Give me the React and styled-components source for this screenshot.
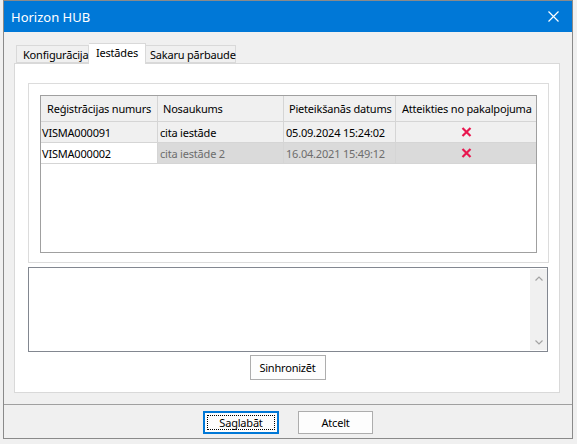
import React from "react";
import styled, { createGlobalStyle } from "styled-components";

const GlobalStyle = createGlobalStyle`
  body {
    margin: 0;
    background: #f0f0f0;
    font-family: "Noto Sans", "Segoe UI", sans-serif;
    font-size: 11px;
    letter-spacing: -0.2px;
    color: #000;
  }
`;

const Screen = styled.div`
  height: 444px;
  padding-left: 3px;
  background: #f0f0f0;
`;

const Window = styled.div`
  width: 570px;
  height: 439px;
  box-sizing: border-box;
  border: 1px solid #8a8a8a;
  display: flex;
  flex-direction: column;
  background: #f0f0f0;
`;

const TitleBar = styled.div`
  height: 31px;
  flex: none;
  background: #0078d7;
  color: #fff;
  display: flex;
  align-items: center;
  justify-content: space-between;
  padding: 0 13px 0 7px;
  font-size: 13px;
  letter-spacing: 0;
`;

const Body = styled.div`
  padding: 11px 12px 0 10px;
  display: flex;
  flex-direction: column;
`;

const TabStrip = styled.div`
  display: flex;
  align-items: flex-end;
  height: 20px;
  padding-left: 2px;
  position: relative;
  z-index: 1;
`;

const Tab = styled.div`
  box-sizing: border-box;
  width: ${(p) => p.$width}px;
  height: ${(p) => (p.$active ? 21 : 18)}px;
  margin-bottom: ${(p) => (p.$active ? -1 : 0)}px;
  border: 1px solid #d9d9d9;
  border-bottom: ${(p) => (p.$active ? "none" : "1px solid #d9d9d9")};
  background: ${(p) => (p.$active ? "#fff" : "#f0f0f0")};
  display: flex;
  align-items: center;
  padding-left: ${(p) => p.$pad}px;
  padding-bottom: ${(p) => (p.$active ? 3 : 0)}px;
  white-space: nowrap;
  & + & {
    border-left: ${(p) => (p.$active ? "1px solid #d9d9d9" : "none")};
  }
`;

const Panel = styled.div`
  box-sizing: border-box;
  height: 330px;
  border: 1px solid #d9d9d9;
  background: #fff;
  padding: 19px 10px 0 13px;
  display: flex;
  flex-direction: column;
`;

const GroupBox = styled.div`
  box-sizing: border-box;
  height: 180px;
  border: 1px solid #dcdcdc;
  padding: 11px 11px 9px 11px;
`;

const Grid = styled.div`
  box-sizing: border-box;
  height: 158px;
  border: 1px solid #a0a0a0;
  display: grid;
  grid-template-columns: 117px 126px 112px 140px;
  grid-auto-rows: 21px;
  grid-template-rows: 26px;
  align-content: start;
`;

const HeadCell = styled.div`
  box-sizing: border-box;
  background: #f0f0f0;
  border-right: ${(p) => (p.$last ? "none" : "1px solid #d5d5d5")};
  border-bottom: 1px solid #d5d5d5;
  display: flex;
  align-items: center;
  padding-left: ${(p) => p.$pad}px;
  white-space: nowrap;
  overflow: hidden;
`;

const Cell = styled.div`
  box-sizing: border-box;
  background: ${(p) => p.$bg};
  color: ${(p) => p.$color || "#000"};
  border-right: ${(p) => (p.$last ? "none" : "1px solid #d5d5d5")};
  border-bottom: 1px solid #d5d5d5;
  display: flex;
  align-items: center;
  justify-content: ${(p) => (p.$center ? "center" : "flex-start")};
  padding-left: ${(p) => (p.$center ? 0 : p.$pad || 2)}px;
  white-space: nowrap;
  overflow: hidden;
`;

const Memo = styled.div`
  box-sizing: border-box;
  width: 520px;
  height: 85px;
  margin-top: 4px;
  border: 1px solid #828790;
  background: #fff;
  display: flex;
  justify-content: flex-end;
  padding: 1px 0 1px 0;
`;

const ScrollBar = styled.div`
  width: 17px;
  background: #f0f0f0;
  display: flex;
  flex-direction: column;
  justify-content: space-between;
  align-items: center;
  padding: 7px 0 5px;
`;

const Button = styled.div`
  box-sizing: border-box;
  width: ${(p) => p.$width}px;
  height: ${(p) => p.$height}px;
  border: 1px solid ${(p) => (p.$default ? "#0078d7" : "#adadad")};
  box-shadow: ${(p) => (p.$default ? "inset 0 0 0 1px #0078d7" : "none")};
  background: #fdfdfd;
  display: flex;
  align-items: center;
  justify-content: center;
  padding: 3px;
`;

const FocusRect = styled.div`
  flex: 1;
  align-self: stretch;
  border: 1px dotted #000;
  display: flex;
  align-items: center;
  justify-content: center;
`;

const SyncRow = styled.div`
  display: flex;
  justify-content: center;
  margin-top: 3px;
  padding-right: 2px;
`;

const Separator = styled.div`
  height: 1px;
  background: #a0a0a0;
  margin-top: 11px;
`;

const Footer = styled.div`
  display: flex;
  justify-content: center;
  gap: 19px;
  padding: 6px 0 0 0;
`;

const CloseIcon = () => (
  <svg width="11" height="11" viewBox="0 0 11 11">
    <path d="M0.5 0.5 L10.5 10.5 M10.5 0.5 L0.5 10.5" stroke="#fff" strokeWidth="1.2" />
  </svg>
);

const RedX = () => (
  <svg width="11" height="10" viewBox="0 0 11 10">
    <path d="M1.5 1 L9.5 9 M9.5 1 L1.5 9" stroke="#e8174f" strokeWidth="2.2" />
  </svg>
);

const Chevron = ({ up }) => (
  <svg width="8" height="5" viewBox="0 0 8 5">
    <path
      d={up ? "M0.5 4.5 L4 1 L7.5 4.5" : "M0.5 0.5 L4 4 L7.5 0.5"}
      stroke="#a3a3a3"
      strokeWidth="1.2"
      fill="none"
    />
  </svg>
);

const tabs = [
  { label: "Konfigurācija", width: 73, pad: 6 },
  { label: "Iestādes", width: 57, pad: 7, active: true },
  { label: "Sakaru pārbaude", width: 90, pad: 4 },
];

const headers = [
  { label: "Reģistrācijas numurs", pad: 6 },
  { label: "Nosaukums", pad: 5 },
  { label: "Pieteikšanās datums", pad: 5 },
  { label: "Atteikties no pakalpojuma", pad: 6 },
];

const rows = [
  {
    id: "VISMA000091",
    name: "cita iestāde",
    date: "05.09.2024 15:24:02",
    idBg: "#f0f0f0",
    bg: "#f0f0f0",
    color: "#000",
  },
  {
    id: "VISMA000002",
    name: "cita iestāde 2",
    date: "16.04.2021 15:49:12",
    idBg: "#fff",
    bg: "#dadada",
    color: "#6d6d6d",
  },
];

const App = () => {
  return (
    <Screen>
      <GlobalStyle />
      <Window>
        <TitleBar>
          <span>Horizon HUB</span>
          <CloseIcon />
        </TitleBar>
        <Body>
          <TabStrip>
            {tabs.map((t) => (
              <Tab key={t.label} $width={t.width} $pad={t.pad} $active={t.active}>
                {t.label}
              </Tab>
            ))}
          </TabStrip>
          <Panel>
            <GroupBox>
              <Grid>
                {headers.map((h, i) => (
                  <HeadCell key={h.label} $pad={h.pad} $last={i === 3}>
                    {h.label}
                  </HeadCell>
                ))}
                {rows.map((r) => (
                  <React.Fragment key={r.id}>
                    <Cell $bg={r.idBg} $pad={1}>
                      {r.id}
                    </Cell>
                    <Cell $bg={r.bg} $color={r.color}>
                      {r.name}
                    </Cell>
                    <Cell $bg={r.bg} $color={r.color}>
                      {r.date}
                    </Cell>
                    <Cell $bg={r.bg} $center $last>
                      <RedX />
                    </Cell>
                  </React.Fragment>
                ))}
              </Grid>
            </GroupBox>
            <Memo>
              <ScrollBar>
                <Chevron up />
                <Chevron />
              </ScrollBar>
            </Memo>
            <SyncRow>
              <Button $width={76} $height={25}>
                Sinhronizēt
              </Button>
            </SyncRow>
          </Panel>
        </Body>
        <Separator />
        <Footer>
          <Button $width={76} $height={23} $default>
            <FocusRect>Saglabāt</FocusRect>
          </Button>
          <Button $width={75} $height={23}>
            Atcelt
          </Button>
        </Footer>
      </Window>
    </Screen>
  );
};

export default App;
